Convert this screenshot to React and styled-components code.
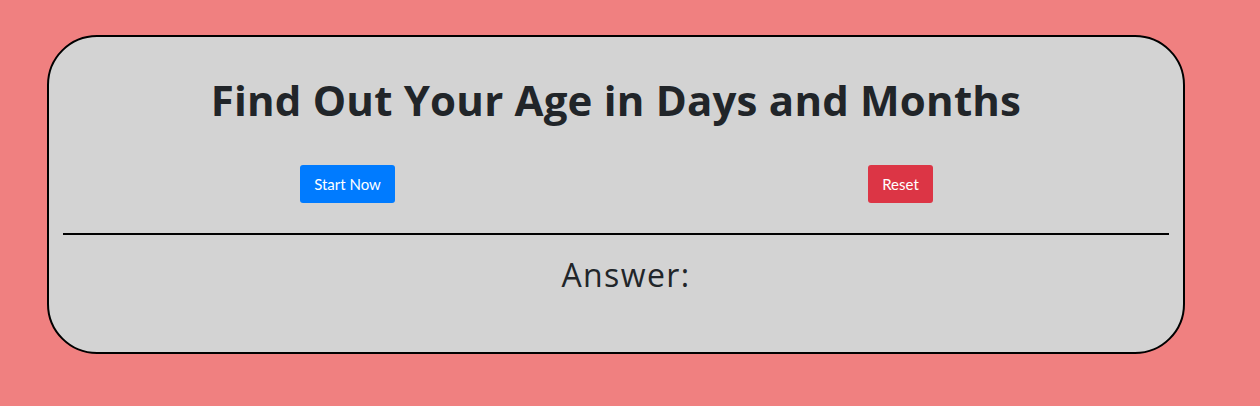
import React from "react";
import styled, { createGlobalStyle } from "styled-components";

const Global = createGlobalStyle`
  html, body { margin: 0; padding: 0; }
  body {
    background: #f08080;
    font-family: "Open Sans", "Liberation Sans", sans-serif;
    color: #212529;
  }
`;

const Page = styled.div`
  padding: 35px 75px 52px 47px;
`;

const Card = styled.div`
  background: #d3d3d3;
  border: 2px solid #000;
  border-radius: 50px;
  padding: 0 14px;
  height: 319px;
  box-sizing: border-box;
`;

const Title = styled.h1`
  margin: 0;
  padding-top: 38px;
  text-align: center;
  font-family: "Open Sans", sans-serif;
  font-weight: 700;
  font-size: 42px;
  line-height: 50px;
  letter-spacing: 0.2px;
  color: #212529;
`;

const ButtonRow = styled.div`
  display: grid;
  grid-template-columns: 1fr 1fr;
  margin: 40px -8px 0 8px;
`;

const Cell = styled.div`
  display: flex;
  justify-content: center;
`;

const Button = styled.button`
  font-family: Lato, "Open Sans", sans-serif;
  font-size: 15px;
  line-height: 24px;
  padding: 7px 14px;
  border: 0;
  border-radius: 3px;
  color: #fff;
  background: ${(p) => (p.$variant === "danger" ? "#dc3545" : "#007bff")};
  cursor: pointer;
`;

const Divider = styled.hr`
  margin: 30px 0 0;
  border: 0;
  border-top: 2px solid #000;
`;

const Answer = styled.h2`
  margin: 0;
  padding: 20px 0 0 20px;
  text-align: center;
  font-family: "Open Sans", sans-serif;
  font-weight: 400;
  font-size: 32px;
  line-height: 40px;
  letter-spacing: 1.4px;
  color: #212529;
`;

export default function App() {
  return (
    <>
      <Global />
      <Page>
        <Card>
          <Title>Find Out Your Age in Days and Months</Title>
          <ButtonRow>
            <Cell>
              <Button>Start Now</Button>
            </Cell>
            <Cell>
              <Button $variant="danger">Reset</Button>
            </Cell>
          </ButtonRow>
          <Divider />
          <Answer>Answer:</Answer>
        </Card>
      </Page>
    </>
  );
}
